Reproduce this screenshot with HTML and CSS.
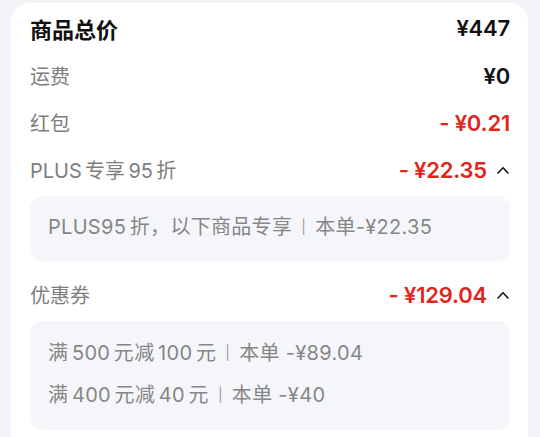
FILE: index.html
```html
<!DOCTYPE html>
<html lang="zh-CN">
<head>
<meta charset="utf-8">
<title>订单金额</title>
<link rel="stylesheet" href="styles.css">
</head>
<body>
<div class="card">
  <div class="row row-total">
    <span class="label-main">商品总价</span>
    <span class="amount">¥447</span>
  </div>
  <div class="row">
    <span class="label">运费</span>
    <span class="amount">¥0</span>
  </div>
  <div class="row">
    <span class="label">红包</span>
    <span class="amount red">- ¥0.21</span>
  </div>
  <div class="row">
    <span class="label">PLUS&#8198;专享&#8198;95&#8198;折</span>
    <span class="amount-wrap">
      <span class="amount red">- ¥22.35</span>
      <svg class="caret" width="12" height="8" viewBox="0 0 12 8"><polyline points="1,7 6,1.8 11,7" fill="none" stroke="#111" stroke-width="1.6" stroke-linecap="round" stroke-linejoin="round"/></svg>
    </span>
  </div>
  <div class="detail detail-plus">
    <div class="line">PLUS95&#8198;折，以下商品专享<span class="sep">|</span>本单-¥22.35</div>
  </div>
  <div class="row row-coupon">
    <span class="label">优惠券</span>
    <span class="amount-wrap">
      <span class="amount red">- ¥129.04</span>
      <svg class="caret" width="12" height="8" viewBox="0 0 12 8"><polyline points="1,7 6,1.8 11,7" fill="none" stroke="#111" stroke-width="1.6" stroke-linecap="round" stroke-linejoin="round"/></svg>
    </span>
  </div>
  <div class="detail detail-coupon">
    <div class="line">满&#8198;500&#8198;元减&#8198;100&#8198;元<span class="sep">|</span>本单 -¥89.04</div>
    <div class="line">满&#8198;400&#8198;元减&#8198;40&#8198;元<span class="sep">|</span>本单 -¥40</div>
  </div>
</div>
</body>
</html>
```
FILE: styles.css
```css
html, body {
  margin: 0;
  padding: 0;
}
body {
  background: #f3f4f8;
  font-family: Inter, "Noto Sans CJK SC", sans-serif;
  height: 437px;
  overflow: hidden;
  padding: 3px 12px 0 11px;
  box-sizing: border-box;
}
.card {
  background: #ffffff;
  border-radius: 18px;
  padding: 0 18px 40px 19px;
  min-height: 480px;
}
.row {
  height: 47px;
  display: flex;
  align-items: center;
  justify-content: space-between;
}
.row-total {
  height: 49px;
}
.label-main {
  font-size: 22px;
  font-weight: 700;
  color: #111111;
}
.label {
  font-size: 20px;
  color: #7e7e7e;
}
.amount {
  font-size: 22px;
  font-weight: 600;
  color: #111111;
  letter-spacing: -0.2px;
}
.amount.red {
  color: #e1251b;
}
.amount-wrap {
  display: flex;
  align-items: center;
}
.caret {
  margin-left: 10px;
  margin-right: 1px;
  display: block;
}
.detail {
  background: #f5f6fa;
  border-radius: 12px;
  padding: 0 18px;
  font-size: 20px;
  color: #868686;
}
.line {
  line-height: 40px;
  white-space: nowrap;
  letter-spacing: 0.3px;
}
.sep {
  color: #9c9c9c;
  margin: 0 9px;
  font-size: 14px;
  font-weight: 400;
  position: relative;
  top: -2px;
}
.detail-plus {
  margin-top: 3px;
  padding-top: 11px;
  padding-bottom: 12px;
}
.row-coupon {
  margin-top: 10px;
}
.detail-coupon {
  margin-top: 3px;
  padding-top: 12px;
  padding-bottom: 13px;
}
```
